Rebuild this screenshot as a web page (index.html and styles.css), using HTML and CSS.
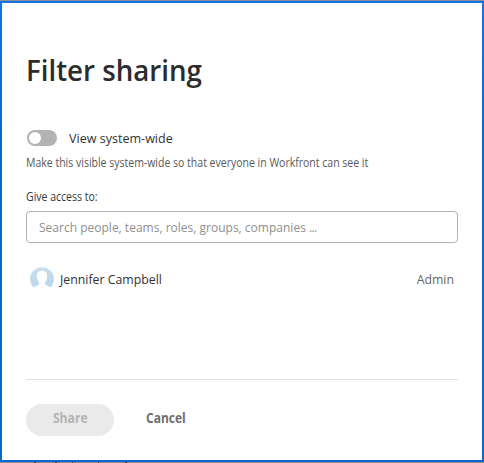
FILE: index.html
```html
<!DOCTYPE html>
<html lang="en">
<head>
<meta charset="utf-8">
<title>Filter sharing</title>
<link rel="stylesheet" href="styles.css">
</head>
<body>
<main class="dialog">
  <h1 class="title"><span>Filter sharing</span></h1>
  <label class="switch-row"><i class="switch"></i><span class="switch-label">View system-wide</span></label>
  <p class="help"><span>Make this visible system-wide so that everyone in Workfront can see it</span></p>
  <p class="field-label"><span>Give access to:</span></p>
  <div class="search"><span>Search people, teams, roles, groups, companies <b class="dots">...</b></span></div>
  <div class="person">
    <svg class="avatar" viewBox="0 0 24 24">
      <defs><linearGradient id="sky" x1="0" y1="0" x2="0" y2="1"><stop offset="0" stop-color="#c9dfee"/><stop offset="1" stop-color="#b9d7ea"/></linearGradient></defs>
      <path fill="url(#sky)" d="M3.2 20.3A12 12 0 1 1 20.8 20.3C19.8 19.5 17.5 18.7 15.6 17.9C14.7 17.4 14.8 15.8 15.3 15C16.5 13.4 17.1 11.3 17.1 9C17.1 5.6 15 3.7 12 3.7S6.9 5.6 6.9 9C6.9 11.3 7.5 13.4 8.7 15C9.2 15.8 9.3 17.4 8.4 17.9C6.5 18.7 4.2 19.5 3.2 20.3Z"/>
    </svg>
    <span class="name">Jennifer Campbell</span>
    <span class="role">Admin</span>
  </div>
  <footer class="actions">
    <button class="share" disabled><span>Share</span></button>
    <button class="cancel"><span>Cancel</span></button>
  </footer>
</main>
</body>
</html>
```
FILE: styles.css
```css
* { box-sizing: border-box; }
body {
  margin: 0;
  height: 463px;
  padding: 1px 0;
  /* tops of the page text that shows below the dialog */
  background:
    linear-gradient(#333, #333) 34px 100% / 2px 1px no-repeat,
    linear-gradient(#333, #333) 55px 100% / 2px 1px no-repeat,
    linear-gradient(#333, #333) 72px 100% / 1px 1px no-repeat,
    linear-gradient(#333, #333) 98px 100% / 1px 1px no-repeat,
    linear-gradient(#333, #333) 125px 100% / 2px 1px no-repeat,
    #8b8f94;
  font-family: "Open Sans", "Noto Sans", sans-serif;
  overflow: hidden;
}
.dialog {
  height: 461px;
  border: 2px solid transparent;
  background:
    linear-gradient(#fff, #fff) padding-box,
    linear-gradient(#1473e6, #0d66d0 130px) border-box;
  padding: 47px 24px 0;
  white-space: nowrap;
}
span {
  display: inline-block;
  transform-origin: left center;
}
.title {
  margin: 0;
  height: 40px;
  line-height: 40px;
  font-size: 29.5px;
  font-weight: 600;
  color: #2c2c2c;
}
.title span { transform: scaleX(.938); }
.switch-row {
  display: flex;
  align-items: center;
  height: 20px;
  margin-top: 38px;
  font-size: 13.5px;
  color: #323232;
}
.switch-label { transform: scaleX(.93); }
.switch {
  width: 30px;
  height: 16px;
  margin: 0 12px 0 1px;
  padding: 2px;
  border-radius: 8px;
  background: #b3b3b3;
}
.switch::before {
  content: "";
  display: block;
  width: 12px;
  height: 12px;
  border-radius: 50%;
  background: #fff;
}
.help, .field-label {
  margin: 7px 0 0;
  height: 16px;
  line-height: 16px;
  font-size: 12px;
  color: #5a5a5a;
}
.help span { transform: scaleX(.875); }
.field-label { margin-top: 18px; color: #383838; }
.field-label span { transform: scaleX(.875); }
.search {
  height: 32px;
  margin-top: 6px;
  padding-left: 12px;
  border: 1px solid #b3b3b3;
  border-radius: 4px;
  line-height: 30px;
  font-size: 13.5px;
  color: #909090;
}
.search span { transform: scaleX(.89); }
.dots { font-weight: 400; letter-spacing: -.8px; }
.person {
  display: flex;
  align-items: center;
  height: 24px;
  margin-top: 24px;
  padding: 0 4px;
  font-size: 13.5px;
  color: #323232;
}
.avatar { width: 24px; height: 24px; margin-right: 6px; }
.name { transform: scaleX(.912); }
.role {
  margin-left: auto;
  font-weight: 500;
  color: #666;
  transform: scaleX(.91);
  transform-origin: right center;
}
.actions {
  display: flex;
  margin-top: 88px;
  padding-top: 24px;
  border-top: 1px solid #e1e1e1;
}
.actions button {
  height: 32px;
  padding: 0 0 4px;
  border: 0;
  border-radius: 16px;
  background: none;
  font: inherit;
  font-size: 13.5px;
  font-weight: 700;
  color: #6e6e6e;
}
.actions .share { width: 88px; background: #eaeaea; color: #b3b3b3; }
.share span { transform: scaleX(.9); transform-origin: center; }
.cancel span { transform: scaleX(.89); }
.actions .cancel { margin-left: 32px; }
```
